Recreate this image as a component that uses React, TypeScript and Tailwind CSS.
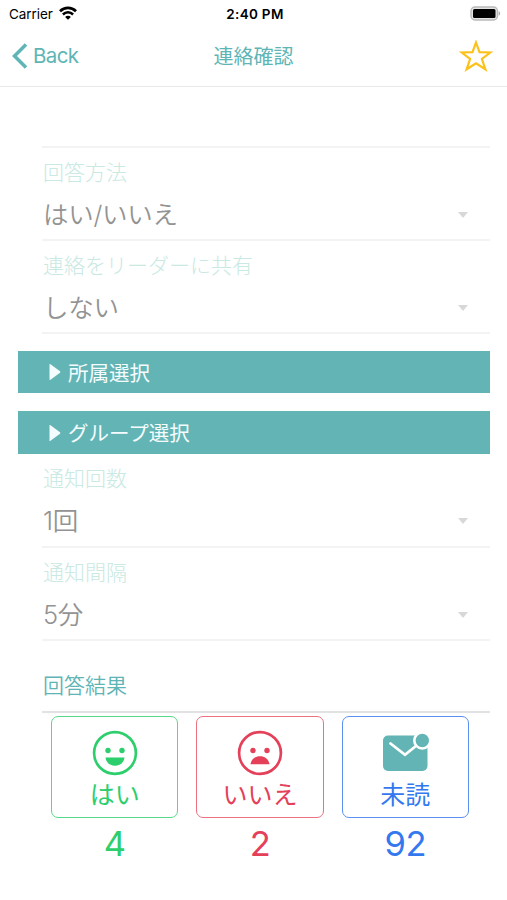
import type { ReactNode } from "react"

function StatusBar() {
  return (
    <div className="grid h-7 grid-cols-3 items-center pr-[6px] pl-[9px] text-[13.500px] text-black">
      <div className="flex items-center gap-[6px]">
        <span className="tracking-[-0.050px]">Carrier</span>
        <svg className="mb-[2px] h-[14px] w-[18px]" viewBox="0 0 18 14" fill="none" stroke="#000">
          <path d="M1 5.3C5.5 .8 12.500 .8 17 5.300" strokeWidth="2.700" />
          <path d="M3.900 8.500C6.800 5.600 11.200 5.600 14.100 8.500" strokeWidth="2.500" />
          <path d="M9 13.800 6.100 10.900C7.700 9.400 10.300 9.400 11.900 10.900Z" fill="#000" stroke="none" />
        </svg>
      </div>
      <span className="text-center text-[13.500px] font-semibold tracking-[0.300px] whitespace-nowrap">2:40 PM</span>
      <svg className="mb-[2px] h-[15px] w-[31px] justify-self-end" viewBox="0 0 31 15">
        <rect x="1" y="1" width="26.500" height="13" rx="4" fill="#e4e4e4" stroke="#b9b9b9" strokeWidth="1.400" />
        <rect x="3" y="3" width="22.500" height="9" rx="1.500" fill="#000" />
        <path d="M28.700 5.300c1.900.7 1.900 3.700 0 4.400Z" fill="#aaa" />
      </svg>
    </div>
  )
}

function NavBar() {
  return (
    <header className="grid h-[59px] grid-cols-3 items-center border-b border-[#e9e9eb] pr-[14px] pl-[12px] text-[#5fb5b5]">
      <button className="mb-[3px] flex items-center gap-[5px] text-[20.500px]">
        <svg className="h-[26px] w-[16px]" viewBox="0 0 16 26" fill="none" stroke="currentColor" strokeWidth="3.500">
          <path d="M14 1.500 2.500 13 14 24.500" />
        </svg>
        <span className="pt-[2px] tracking-[-0.600px]">Back</span>
      </button>
      <h1 className="text-center text-[20px] font-normal whitespace-nowrap">
        <span className="ml-[2px]">連絡確認</span>
      </h1>
      <svg className="mb-[2px] h-[32px] w-[34px] justify-self-end" viewBox="0 0 34 32" fill="none" stroke="#fcc21b" strokeWidth="2.200">
        <path d="M17 2.500 20.500 12.200 31.300 12.500 22.900 19 26.400 29.300 17 23.300 7.600 29.300 11.100 19 2.700 12.500 13.500 12.200Z" />
      </svg>
    </header>
  )
}

function SelectRow({ label, value }: { label: string; value: string }) {
  return (
    <div className="mr-[17px] ml-[42px] h-[93.300px] border-b-2 border-[#f3f3f4] pt-[9px]">
      <div className="h-[32px] pl-px text-[21px] leading-[32px] font-light text-[#c9e9e2]">{label}</div>
      <div className="mt-[9px] flex h-[34px] items-center justify-between pr-[22px]">
        <span className="pl-px text-[25.500px] leading-[34px] font-[350] tracking-[-0.300px] text-[#939393]">{value}</span>
        <svg className="h-[6px] w-[10px]" viewBox="0 0 10 6" fill="#d8d8d8">
          <path d="M0 0h10L5 6Z" />
        </svg>
      </div>
    </div>
  )
}

function SectionBar({ title }: { title: string }) {
  return (
    <button className="mr-[17px] ml-[18px] flex h-[42.300px] items-center gap-[7px] bg-[#63b5b5] pl-[31px] text-[20.500px] font-normal text-[#f5fcff]">
      <svg className="h-[18px] w-[12px]" viewBox="0 0 12 18" fill="currentColor">
        <path d="M.5 1.500Q.5 .5 1.500 1.200L11 8.300Q11.800 9 11 9.700L1.500 16.800Q.5 17.500 .5 16.500Z" />
      </svg>
      <span className="pt-[4px]">{title}</span>
    </button>
  )
}

function FaceIcon({ happy }: { happy: boolean }) {
  return (
    <svg className="h-[46px] w-[46px]" viewBox="0 0 46 46" fill="currentColor">
      <circle cx="23" cy="23" r="20.900" fill="none" stroke="currentColor" strokeWidth="2.700" />
      <circle cx="16" cy="20.500" r="2.700" />
      <circle cx="30" cy="20.500" r="2.700" />
      {happy ? (
        <path d="M13.500 27.500H32.500C31.500 38.500 14.500 38.500 13.500 27.500Z" />
      ) : (
        <path d="M13.500 34.200H32.500C31 23.500 15 23.500 13.500 34.200Z" />
      )}
    </svg>
  )
}

function MailIcon() {
  return (
    <svg className="h-[46px] w-[48px]" viewBox="0 0 48 46">
      <rect x="2" y="5.500" width="44.500" height="35.500" rx="5" fill="#63b5b5" />
      <path d="M9.500 13.500 24 24.800 35.500 15.500" fill="none" stroke="#fff" strokeWidth="2.800" strokeLinecap="round" />
      <circle cx="41.300" cy="10.500" r="8" fill="#63b5b5" stroke="#fff" strokeWidth="2.600" />
    </svg>
  )
}

interface ResultCardProps {
  icon: ReactNode
  label: string
  count: number
  color: string
  border: string
}

function ResultCard({ icon, label, count, color, border }: ResultCardProps) {
  return (
    <div className={`flex flex-col items-center ${color}`}>
      <button className={`flex h-[102px] w-full flex-col items-center rounded-[7px] border-[1.500px] pt-[13px] ${border}`}>
        {icon}
        <span className="mt-px text-[25px] leading-[36px] font-normal">{label}</span>
      </button>
      <span className="mt-[4px] text-[34.500px] leading-[44px] font-normal tracking-[-0.500px]">{count}</span>
    </div>
  )
}

export default function App() {
  return (
    <main className="h-[900px] w-full overflow-hidden bg-white font-['Inter','Noto_Sans_CJK_JP',sans-serif]">
      <StatusBar />
      <NavBar />
      <div className="flex flex-col">
        <div className="mr-[17px] ml-[42px] h-[60.500px] border-b-2 border-[#f3f3f4]" />
        <SelectRow label="回答方法" value="はい/いいえ" />
        <SelectRow label="連絡をリーダーに共有" value="しない" />
        <div className="mt-[17px] mb-[.7px] flex flex-col gap-[18px]">
          <SectionBar title="所属選択" />
          <SectionBar title="グループ選択" />
        </div>
        <SelectRow label="通知回数" value="1回" />
        <SelectRow label="通知間隔" value="5分" />
      </div>
      <section className="mr-[17px] ml-[42px]">
        <h2 className="h-[72px] border-b-2 border-[#e2e2e5] pt-[29px] pl-px text-[21px] leading-[32px] font-[350] text-[#5fb5b5]">回答結果</h2>
        <div className="mt-[3px] grid grid-cols-3 gap-[18px] pr-[21px] pl-[9px]">
          <ResultCard icon={<FaceIcon happy />} label="はい" count={4} color="text-[#2dce6c]" border="border-[#58d98a]" />
          <ResultCard icon={<FaceIcon happy={false} />} label="いいえ" count={2} color="text-[#e4405a]" border="border-[#ec7181]" />
          <ResultCard icon={<MailIcon />} label="未読" count={92} color="text-[#3478f0]" border="border-[#5a90f2]" />
        </div>
      </section>
    </main>
  )
}
